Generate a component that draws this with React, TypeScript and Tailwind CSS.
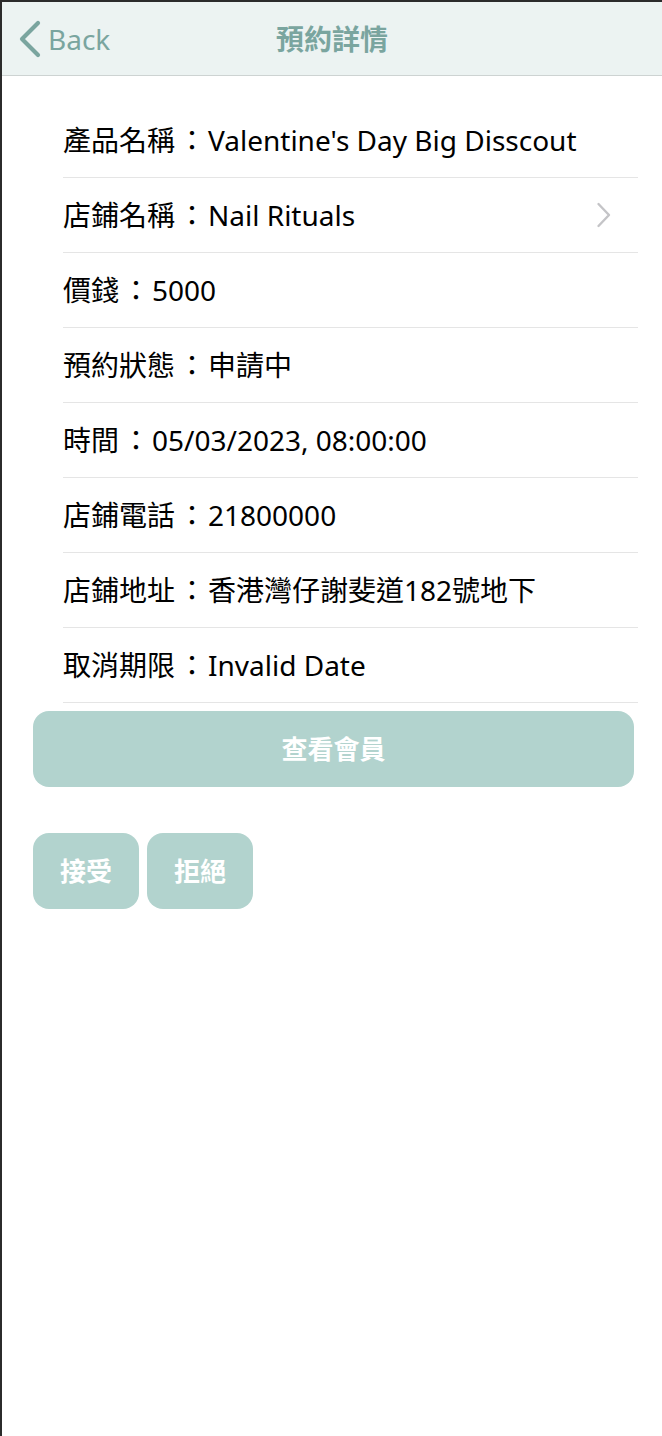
const rows = [
  { label: "產品名稱", value: "Valentine's Day Big Disscout" },
  { label: "店鋪名稱", value: "Nail Rituals", link: true },
  { label: "價錢", value: "5000" },
  { label: "預約狀態", value: "申請中" },
  { label: "時間", value: "05/03/2023, 08:00:00" },
  { label: "店鋪電話", value: "21800000" },
  { label: "店鋪地址", value: "香港灣仔謝斐道182號地下" },
  { label: "取消期限", value: "Invalid Date" },
];

const font = "font-['Noto_Sans','Noto_Sans_CJK_TC',sans-serif]";

export default function App() {
  return (
    <div className={`min-h-[1436px] w-full border-l-2 border-t-2 border-[#2b2b2b] bg-white ${font}`}>
      <header className="relative flex h-[74px] items-center border-b border-[#cdd3d2] bg-[#ecf3f2]">
        <button className="flex items-center gap-[7px] pl-[15px] text-[#7aa59f]">
          <svg width="24" height="38" viewBox="0 0 24 38" fill="none">
            <path d="M21 3 5 19l16 16" stroke="currentColor" strokeWidth="4.2" strokeLinecap="round" strokeLinejoin="round" />
          </svg>
          <span className="text-[28px] leading-none">Back</span>
        </button>
        <h1 className="absolute left-1/2 -translate-x-1/2 text-[28px] font-bold text-[#7aa59f]">
          預約詳情
        </h1>
      </header>

      <main className="pt-[27px]">
        <ul className="ml-[61px] mr-[24px]">
          {rows.map((r) => (
            <li
              key={r.label}
              className="flex h-[75px] items-center justify-between border-b border-[#e5e5e5] text-[28px] text-black"
            >
              <span>
                {r.label}
                <span className="inline-block w-[33px] pl-[3px]">：</span>
                {r.value}
              </span>
              {r.link && (
                <svg className="mr-[26px]" width="16" height="26" viewBox="0 0 16 26" fill="none">
                  <path d="M2.5 2 13 13 2.5 24" stroke="#c4c4c7" strokeWidth="2.4" strokeLinecap="round" strokeLinejoin="round" />
                </svg>
              )}
            </li>
          ))}
        </ul>

        <div className="pl-[31px] pr-[28px] pt-2">
          <button className="flex h-[76px] w-full items-center justify-center rounded-[16px] bg-[#b2d3ce] text-[26px] font-bold text-white">
            查看會員
          </button>
          <div className="mt-[46px] flex gap-2">
            <button className="flex h-[76px] w-[106px] items-center justify-center rounded-[16px] bg-[#b2d3ce] text-[26px] font-bold text-white">
              接受
            </button>
            <button className="flex h-[76px] w-[106px] items-center justify-center rounded-[16px] bg-[#b2d3ce] text-[26px] font-bold text-white">
              拒絕
            </button>
          </div>
        </div>
      </main>
    </div>
  );
}
